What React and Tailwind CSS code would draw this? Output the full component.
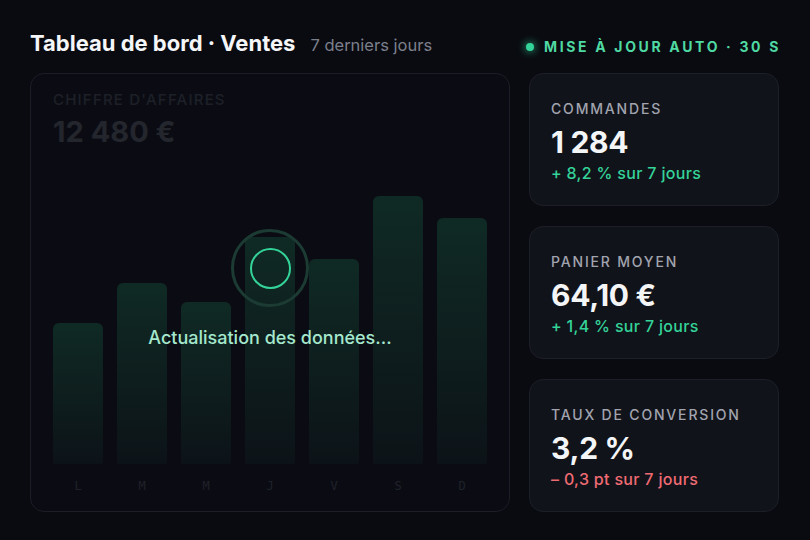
import React from "react";

const bars = [
  { d: "L", h: 141 },
  { d: "M", h: 181 },
  { d: "M", h: 162 },
  { d: "J", h: 227 },
  { d: "V", h: 205 },
  { d: "S", h: 268 },
  { d: "D", h: 246 },
];

function Stat({ label, value, change, up }) {
  return (
    <div className="flex-1 rounded-[14px] border border-[#1c1f28] bg-[#11131a] px-[21px] pt-[25px]">
      <div className="text-[14px] leading-[20px] font-medium tracking-[0.13em] text-[#a1a4af]">{label}</div>
      <div className="mt-[5px] text-[30px] leading-[36px] font-bold tracking-[-0.01em] text-[#f4f5f7]">{value}</div>
      <div className={"mt-[3px] text-[16px] leading-[20px] font-medium tracking-[0.02em] " + (up ? "text-[#34d399]" : "text-[#ef6b73]")}>{change}</div>
    </div>
  );
}

export default function App() {
  return (
    <div className="h-[540px] w-[810px] overflow-hidden bg-[#0a0b11] px-[30px] pt-[29px] font-['Inter',sans-serif]">
      <div className="flex h-[28px] items-baseline justify-between">
        <div className="flex items-baseline gap-[15px]">
          <div className="text-[22px] leading-[28px] font-bold text-[#f5f6f8]">Tableau de bord · Ventes</div>
          <div className="text-[16.5px] leading-[28px] text-[#7b7f8b]">7 derniers jours</div>
        </div>
        <div className="flex items-center gap-[10px]">
          <span className="h-[8px] w-[8px] rounded-full bg-[#34d399] shadow-[0_0_8px_#34d399]" />
          <span className="-mr-[1px] text-[14px] leading-[28px] font-bold tracking-[0.19em] text-[#4fd9a3]">MISE À JOUR AUTO · 30 S</span>
        </div>
      </div>

      <div className="mt-[16px] flex h-[439px] gap-[19px]">
        <div className="relative flex w-[480px] flex-col rounded-[14px] border border-[#1b1e27] bg-[#0b0c13] px-[22px] pt-[16px] pb-[16px]">
          <div className="text-[15px] leading-[20px] font-medium tracking-[0.08em] text-[#1d2028]">CHIFFRE D'AFFAIRES</div>
          <div className="mt-[5px] text-[29px] leading-[34px] font-bold text-[#24262e]">12 480 €</div>
          <div className="mt-auto flex items-end justify-between">
            {bars.map((b, i) => (
              <div key={i} className="w-[50px] rounded-t-[6px] rounded-b-[3px] bg-gradient-to-b from-[#0f2a24] to-[#0c1318]" style={{ height: b.h }} />
            ))}
          </div>
          <div className="mt-[13px] flex justify-between">
            {bars.map((b, i) => (
              <div key={i} className="w-[50px] text-center font-['DejaVu_Sans_Mono',monospace] text-[12px] leading-[18px] text-[#1f222a]">{b.d}</div>
            ))}
          </div>

          <div className="absolute inset-0 flex flex-col items-center justify-center pb-[7px]">
            <div className="flex h-[78px] w-[78px] items-center justify-center rounded-full border-[3px] border-[#1b3b33]">
              <div className="h-[41px] w-[41px] rounded-full border-2 border-[#34d399]" />
            </div>
            <div className="mt-[20px] text-[18px] leading-[22px] font-medium text-[#a5e8cd]">Actualisation des données...</div>
          </div>
        </div>

        <div className="flex w-[250px] flex-col gap-[20px]">
          <Stat label="COMMANDES" value="1 284" change="+ 8,2 % sur 7 jours" up />
          <Stat label="PANIER MOYEN" value="64,10 €" change="+ 1,4 % sur 7 jours" up />
          <Stat label="TAUX DE CONVERSION" value="3,2 %" change="– 0,3 pt sur 7 jours" />
        </div>
      </div>
    </div>
  );
}
